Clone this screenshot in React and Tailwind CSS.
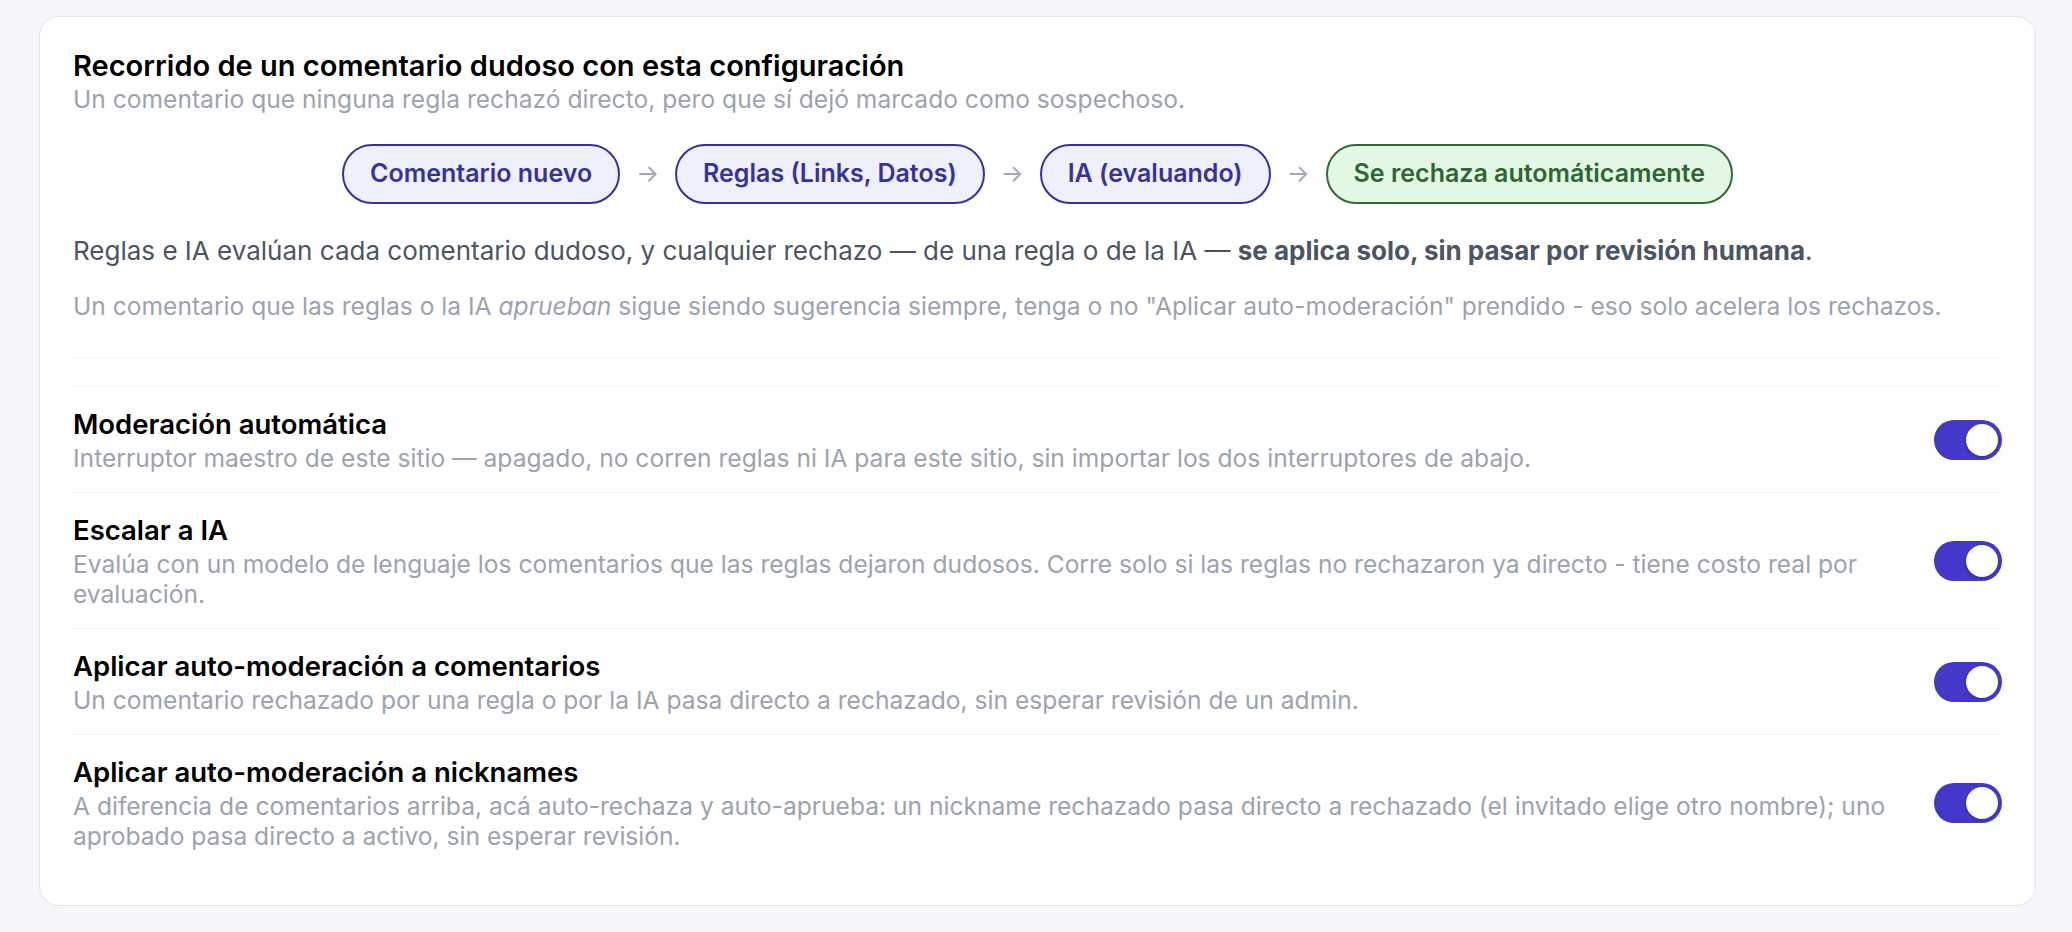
import React, { useState } from 'react';

const steps = [
  { label: 'Comentario nuevo', tone: 'indigo' },
  { label: 'Reglas (Links, Datos)', tone: 'indigo' },
  { label: 'IA (evaluando)', tone: 'indigo' },
  { label: 'Se rechaza automáticamente', tone: 'green' },
];

const settings = [
  {
    id: 'auto',
    title: 'Moderación automática',
    desc: 'Interruptor maestro de este sitio — apagado, no corren reglas ni IA para este sitio, sin importar los dos interruptores de abajo.',
  },
  {
    id: 'ia',
    title: 'Escalar a IA',
    desc: 'Evalúa con un modelo de lenguaje los comentarios que las reglas dejaron dudosos. Corre solo si las reglas no rechazaron ya directo - tiene costo real por evaluación.',
  },
  {
    id: 'comments',
    title: 'Aplicar auto-moderación a comentarios',
    desc: 'Un comentario rechazado por una regla o por la IA pasa directo a rechazado, sin esperar revisión de un admin.',
  },
  {
    id: 'nicks',
    title: 'Aplicar auto-moderación a nicknames',
    desc: 'A diferencia de comentarios arriba, acá auto-rechaza y auto-aprueba: un nickname rechazado pasa directo a rechazado (el invitado elige otro nombre); uno aprobado pasa directo a activo, sin esperar revisión.',
  },
];

function Toggle({ on, onChange }) {
  return (
    <button
      type="button"
      role="switch"
      aria-checked={on}
      onClick={() => onChange(!on)}
      className={`relative shrink-0 w-[68px] h-[40px] rounded-full transition-colors ${on ? 'bg-[#4338ca]' : 'bg-gray-300'}`}
    >
      <span
        className={`absolute top-[4px] left-[4px] w-[32px] h-[32px] rounded-full bg-white shadow-[-1px_1px_2px_rgba(0,0,0,0.25)] transition-transform ${on ? 'translate-x-[28px]' : 'translate-x-0'}`}
      />
    </button>
  );
}

function Step({ label, tone }) {
  const cls =
    tone === 'green'
      ? 'bg-[#e2f8e5] border-[#2f6a37] text-[#2e6636]'
      : 'bg-[#eef0fc] border-[#3730a3] text-[#3730a3]';
  return (
    <div className={`h-[60px] flex items-center px-[26px] rounded-full border-2 text-[25px] font-semibold ${cls}`}>
      {label}
    </div>
  );
}

export default function App() {
  const [values, setValues] = useState({ auto: true, ia: true, comments: true, nicks: true });

  return (
    <div className="min-h-screen bg-[#f5f5fa] pl-[39px] pt-[16px] pb-[27px]" style={{ fontFamily: 'Inter, "Noto Sans", sans-serif' }}>
      <div className="w-[1997px] bg-white border border-[#e4e4ea] rounded-[20px] px-[33px] pt-[31px] pb-[35px]">
        <div className="border-b border-[#f1f3f6] pb-[35px]">
          <h2 className="text-[29px] leading-[36px] font-semibold text-black">
            Recorrido de un comentario dudoso con esta configuración
          </h2>
          <p className="text-[24.6px] leading-[31px] text-[#9ca3af]">
            Un comentario que ninguna regla rechazó directo, pero que sí dejó marcado como sospechoso.
          </p>

          <div className="mt-[29px] flex items-center justify-center gap-[16px]">
            {steps.map((s, i) => (
              <React.Fragment key={s.label}>
                {i > 0 && <span className="text-[24px] text-[#a3a8b3]">→</span>}
                <Step {...s} />
              </React.Fragment>
            ))}
          </div>

          <p className="mt-[29px] text-[26px] leading-[36px] text-[#4b5563]">
            Reglas e IA evalúan cada comentario dudoso, y cualquier rechazo — de una regla o de la IA —{' '}
            <strong className="font-bold">se aplica solo, sin pasar por revisión humana</strong>.
          </p>
          <p className="mt-[22px] text-[24.6px] leading-[31px] text-[#9ca3af]">
            Un comentario que las reglas o la IA <em>aprueban</em> sigue siendo sugerencia siempre, tenga o no
            "Aplicar auto-moderación" prendido - eso solo acelera los rechazos.
          </p>
        </div>

        <div className="mt-[28px] border-t border-[#f1f3f6] divide-y divide-[#f1f3f6]">
          {settings.map((s) => (
            <div key={s.id} className="flex items-center gap-[32px] py-[19px]">
              <div className="flex-1 min-w-0">
                <div className="text-[27.5px] leading-[37px] font-semibold text-black">{s.title}</div>
                <div className="text-[24.6px] leading-[30px] text-[#9ca3af]">{s.desc}</div>
              </div>
              <Toggle
                on={values[s.id]}
                onChange={(v) => setValues((prev) => ({ ...prev, [s.id]: v }))}
              />
            </div>
          ))}
        </div>
      </div>
    </div>
  );
}
